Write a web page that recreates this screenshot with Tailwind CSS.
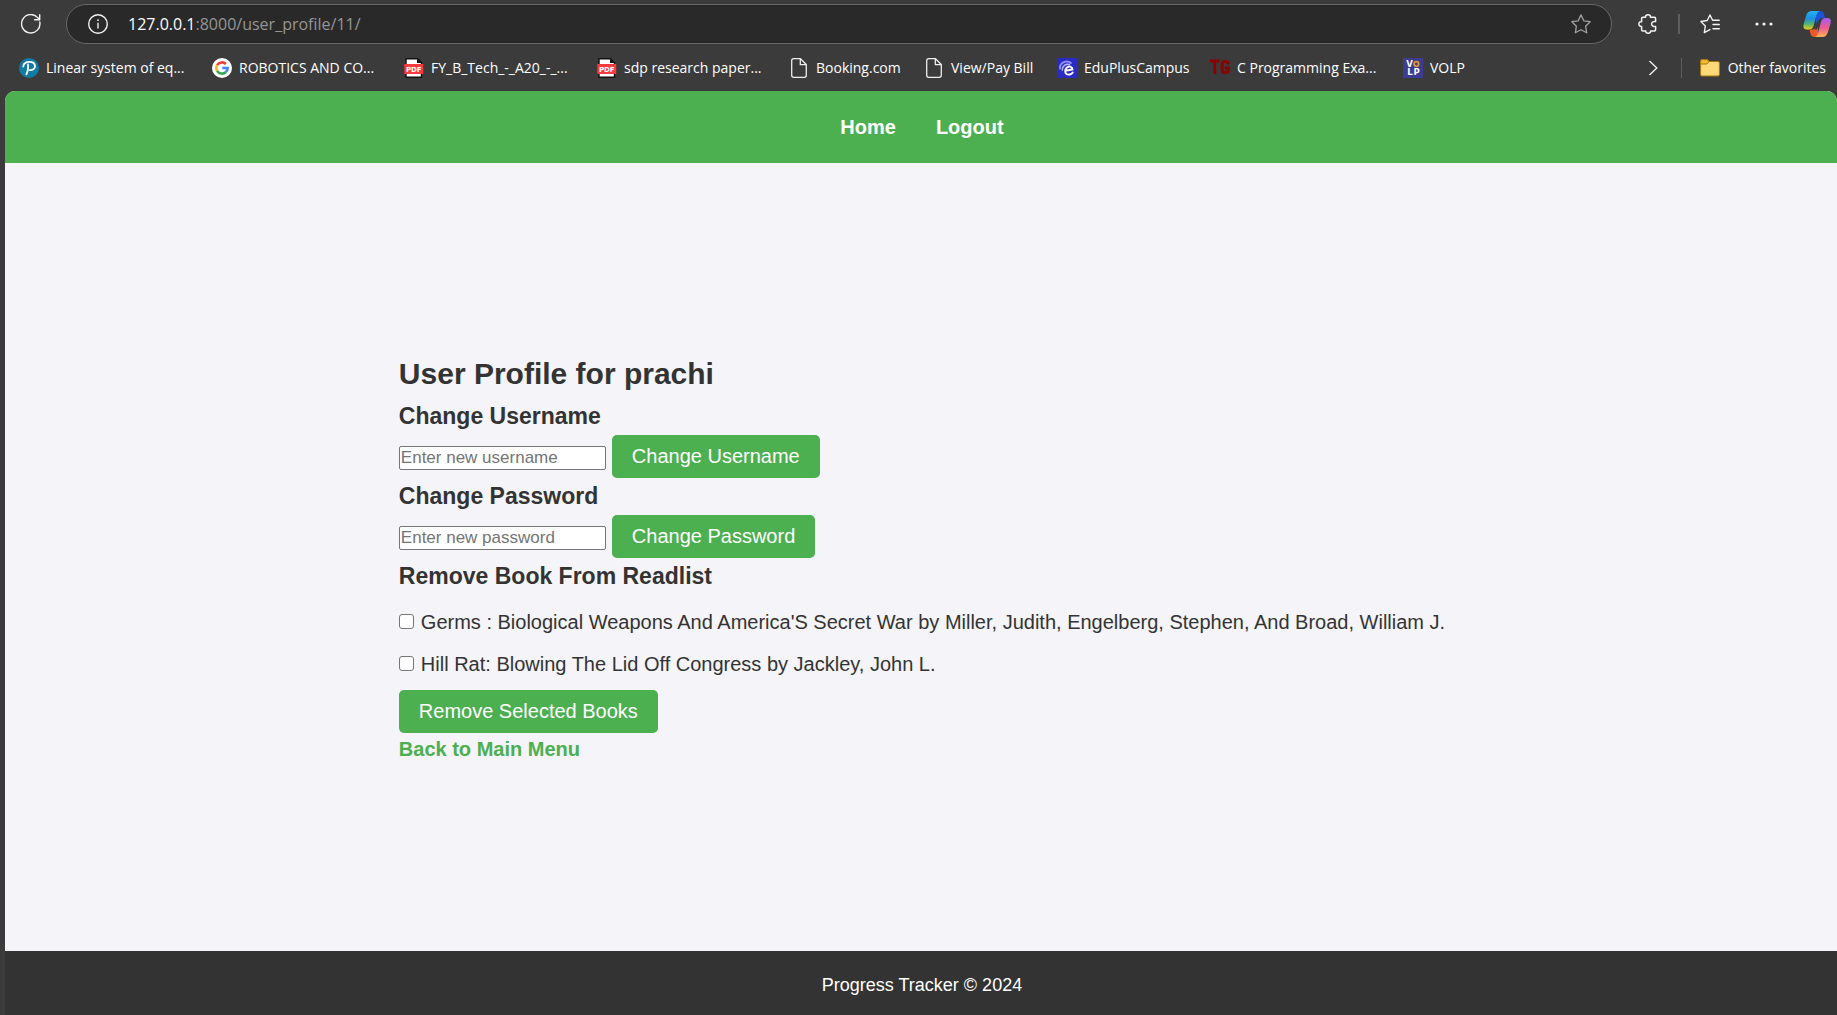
<!DOCTYPE html>
<html lang="en">
<head>
<meta charset="utf-8">
<title>User Profile</title>
<script src="https://cdn.jsdelivr.net/npm/@tailwindcss/browser@4"></script>
</head>
<body class="min-h-screen flex flex-col bg-[#3b3b3b] font-['Liberation_Sans',Arial,sans-serif] text-[#333]">

<!-- Browser toolbar -->
<header class="font-['Segoe_UI','Open_Sans',sans-serif] text-white">
  <div class="flex items-center h-12 pl-[21px] pr-[6px]">
    <button aria-label="Refresh" class="size-5 shrink-0">
      <svg class="size-5" viewBox="0 0 20 20" fill="none" stroke="#f2f2f2" stroke-width="1.4" stroke-linecap="round" stroke-linejoin="round"><path d="M18.8 8A9.2 9.2 0 1 1 16.6 3.6L18.5 5.6M18.7.8V5.8H13.6"/></svg>
    </button>
    <div class="flex flex-1 items-center h-10 ml-[25px] mr-[26px] pl-[21px] pr-5 rounded-full border border-[#686868] bg-[#292929]">
      <svg class="size-5 shrink-0" viewBox="0 0 20 20" fill="none" stroke="#f2f2f2" stroke-width="1.4"><circle cx="10" cy="10" r="9.3"/><path d="M10 8.8V14.6"/><circle cx="10" cy="6.2" r=".9" fill="#f2f2f2" stroke="none"/></svg>
      <p class="flex-1 ml-5 text-[16px] leading-6 text-[#959595]"><span class="text-white">127.0.0.1</span>:8000/user_profile/11/</p>
      <button aria-label="Add to favorites" class="size-5">
        <svg class="size-5" viewBox="0 0 20 20" fill="none" stroke="#a0a0a0" stroke-width="1.3" stroke-linejoin="round"><path d="M10 .9 12.8 6.8 19.2 7.7 14.6 12.2 15.7 18.8 10 15.7 4.3 18.8 5.4 12.2.8 7.7 7.2 6.8Z"/></svg>
      </button>
    </div>
    <button aria-label="Extensions" class="size-5">
      <svg class="size-5" viewBox="0 0 20 20" fill="none" stroke="#f2f2f2" stroke-width="1.5" stroke-linejoin="round"><path d="M4.8 3.2H7.6C7.2 1.6 8.4.8 10 .8S12.8 1.6 12.4 3.2H16.4Q17.6 3.2 17.6 4.4V7.6C15.500 7 13.600 8.200 13.600 10S15.500 13 17.600 12.400V15.8Q17.6 17 16.4 17H12.6C12.8 18.4 11.8 19.2 10.2 19.2S7.4 18.4 7.8 17H4.8Q3.6 17 3.6 15.8V12.4C2 12.6.9 11.6.9 10S2 7.4 3.6 7.8V4.400Q3.600 3.200 4.800 3.200Z"/></svg>
    </button>
    <span class="w-[2px] h-5 ml-5 mr-5 bg-[#5e5e5e]"></span>
    <button aria-label="Favorites" class="size-5">
      <svg class="size-5" viewBox="0 0 20 20" fill="none" stroke="#f2f2f2" stroke-width="1.4" stroke-linejoin="round" stroke-linecap="round"><path d="M19.2 6.3H12.6L10 1 7.2 6.5 .9 7.5 5.3 12 4.3 18.6 9.9 15.6M13 10.5H19.3M13 14.7H19.3"/></svg>
    </button>
    <button aria-label="Settings and more" class="w-5 h-5 ml-[34px]">
      <svg class="size-5" viewBox="0 0 20 20" fill="#f2f2f2"><circle cx="3" cy="10" r="1.6"/><circle cx="10" cy="10" r="1.6"/><circle cx="17" cy="10" r="1.6"/></svg>
    </button>
    <button aria-label="Copilot" class="size-7 ml-[29px]">
      <svg class="size-7" viewBox="0 0 28 28">
        <defs>
          <linearGradient id="left" x1="0" y1="0" x2="0" y2="1"><stop offset="0" stop-color="#22b5f5"/><stop offset=".4" stop-color="#1c8fe0"/><stop offset=".7" stop-color="#4fb276"/><stop offset="1" stop-color="#f2cf13"/></linearGradient>
          <linearGradient id="right" x1="0" y1="0" x2="0" y2="1"><stop offset="0" stop-color="#a45cf4"/><stop offset=".5" stop-color="#ec5a93"/><stop offset="1" stop-color="#ffb152"/></linearGradient>
        </defs>
        <path fill="#1b55d6" d="M13 1H17.5Q20 1 21 4L22 8H19Q16.500 8 15.800 10L13 14Z"/>
        <path fill="#f0582c" d="M15 27H11.500Q8.500 27 7.500 24L6.500 19.500H9.500Q11.800 19.500 12.500 17L15 11Z"/>
        <path fill="url(#left)" d="M9 1H16.500Q14.500 1.500 13.500 5L10.500 16Q9.500 19.500 6 19.500H4Q-.5 19.500.6 14.500L3 6Q4.300 1 9 1Z"/>
        <path fill="url(#right)" d="M19.500 27H12Q14 26.500 15 23L18 12Q19 8 22.500 8H24.500Q28.800 8 27.500 13.500L25 22Q23.500 27 19.500 27Z"/>
        <path fill="#3b3b3b" d="M14.500 11 17.500 10.500 14 19.500H11.500Z"/>
      </svg>
    </button>
  </div>

  <!-- Favorites bar -->
  <nav aria-label="Favorites bar" class="flex items-center h-[43px] pl-[19px] pr-[11px] pb-[3px] text-[14px] leading-5 whitespace-nowrap">
    <a href="#" class="flex items-center gap-[7px] w-[193px]">
      <svg class="size-5" viewBox="0 0 20 20"><circle cx="10" cy="10" r="10" fill="#117ba3"/><path d="M4.300 8.500C4.500 5.500 7 3.800 10.500 3.800 14 3.800 16 5.500 16 8.200 16 11 13.700 12.400 10.700 12.100M9 6.500C9.200 10 9 13.500 7.400 16.200" fill="none" stroke="#fff" stroke-width="1.800" stroke-linecap="round"/></svg>
      Linear system of eq...</a>
    <a href="#" class="flex items-center gap-[7px] w-[192px]">
      <svg class="size-5" viewBox="0 0 20 20" fill="none" stroke-width="2.600"><circle cx="10" cy="10" r="10" fill="#fff"/><path stroke="#ea4335" d="M5.100 7.200A5.600 5.600 0 0 1 13.900 6"/><path stroke="#fbbc05" d="M5.100 12.800A5.600 5.600 0 0 1 5.100 7.200"/><path stroke="#34a853" d="M13.700 14.200A5.600 5.600 0 0 1 5.100 12.800"/><path stroke="#4285f4" d="M10.200 10H15.600A5.600 5.600 0 0 1 13.700 14.200"/></svg>
      ROBOTICS AND CO...</a>
    <a href="#" class="flex items-center gap-[7px] w-[193px]">
      <svg class="size-5" viewBox="0 0 20 20"><path d="M2 .7H13.500L17.500 4.700V19.300H2Z" fill="#fff" stroke="#111" stroke-width="1.400"/><path d="M13 .7V5H17.500Z" fill="#111"/><rect x=".3" y="6" width="18.900" height="10" fill="#f83b3e"/><text x="9.800" y="13.700" text-anchor="middle" font-family="DejaVu Sans" font-weight="700" font-size="7" fill="#fff">PDF</text></svg>
      FY_B_Tech_-_A20_-_...</a>
    <a href="#" class="flex items-center gap-[7px] w-[193px]">
      <svg class="size-5" viewBox="0 0 20 20"><path d="M2 .7H13.500L17.500 4.700V19.300H2Z" fill="#fff" stroke="#111" stroke-width="1.400"/><path d="M13 .7V5H17.500Z" fill="#111"/><rect x=".3" y="6" width="18.900" height="10" fill="#f83b3e"/><text x="9.800" y="13.700" text-anchor="middle" font-family="DejaVu Sans" font-weight="700" font-size="7" fill="#fff">PDF</text></svg>
      sdp research paper...</a>
    <a href="#" class="flex items-center gap-2 w-[135px]">
      <svg class="w-[18px] h-5" viewBox="0 0 18 20" fill="none" stroke="#eee" stroke-width="1.300" stroke-linejoin="round"><path d="M3.700.7H10.500L16.300 6.500V17.300Q16.300 19.300 14.300 19.300H3.700Q1.700 19.300 1.700 17.300V2.700Q1.700.7 3.700.7ZM10.300.9V6.700H16"/></svg>
      Booking.com</a>
    <a href="#" class="flex items-center gap-2 w-[132px]">
      <svg class="w-[18px] h-5" viewBox="0 0 18 20" fill="none" stroke="#eee" stroke-width="1.300" stroke-linejoin="round"><path d="M3.700.7H10.500L16.300 6.500V17.300Q16.300 19.300 14.300 19.300H3.700Q1.700 19.300 1.700 17.300V2.700Q1.700.7 3.700.7ZM10.300.9V6.700H16"/></svg>
      View/Pay Bill</a>
    <a href="#" class="flex items-center gap-[7px] w-[153px]">
      <svg class="size-5" viewBox="0 0 20 20" fill="none" stroke-linecap="round"><rect width="20" height="20" rx="1" fill="#2a2bc4"/><path d="M3 10.500C2.500 5 9 1.500 14 5" stroke="#8c8df0" stroke-width="2"/><path d="M5.300 12C5 8 9 5.500 12.500 6.500" stroke="#b9baf8" stroke-width="1.500"/><path d="M8.500 12.800 15.500 11.500C15.400 8.700 12.500 7.800 10.300 9.200 7.800 10.800 7.500 14.500 9.500 16 11.500 17.300 14.500 16.500 15.700 14.500" stroke="#fff" stroke-width="1.900"/></svg>
      EduPlusCampus</a>
    <a href="#" class="flex items-center gap-[7px] w-[193px]">
      <svg class="size-5" viewBox="0 0 20 20" fill="none" stroke="#8b0000" stroke-width="3"><path d="M0 3H9.500M4.800 3V16M18.300 6.500C18 2.500 12.300 2 12.100 7V11.500C12.300 16 18.300 15.500 18.300 11.500V10H14.800"/></svg>
      C Programming Exa...</a>
    <a href="#" class="flex items-center gap-[7px]">
      <svg class="size-5" viewBox="0 0 20 20" font-family="DejaVu Sans" font-weight="700" font-size="8.500" text-anchor="middle" fill="#fff"><rect width="20" height="20" fill="#3d3b92"/><text x="6.500" y="9">V</text><circle cx="13.400" cy="6" r="2.300" fill="none" stroke="#e09b2d" stroke-width="1.700"/><text x="7" y="17">L</text><text x="13.500" y="17">P</text></svg>
      VOLP</a>
    <button aria-label="More favorites" class="ml-auto">
      <svg class="w-3 h-5" viewBox="0 0 12 20" fill="none" stroke="#eee" stroke-width="1.400"><path d="M2.500 3 9.800 10 2.500 17"/></svg>
    </button>
    <span class="w-px h-5 ml-[22px] mr-[18px] bg-[#5e5e5e]"></span>
    <a href="#" class="flex items-center gap-2">
      <svg class="size-5" viewBox="0 0 20 20" stroke="#a8780c"><path d="M.6 3.500Q.6 1.600 2.200 1.600H7L9.200 3.500H18Q19.400 3.500 19.400 5V16.500Q19.400 18 18 18H2Q.6 18 .6 16.500Z" fill="#ffd977"/><path d="M.6 3.500Q.6 1.600 2.200 1.600H7L9 3.500 7 6H.6Z" fill="#f5bd2e"/></svg>
      Other favorites</a>
  </nav>
</header>

<!-- Web page -->
<div class="flex flex-1 flex-col ml-[5px] overflow-hidden rounded-t-[10px] bg-[#f4f4f9] text-[20px] leading-8">
  <nav aria-label="Site" class="flex justify-center gap-10 py-5 pl-[2px] bg-[#4caf50] font-bold text-white">
    <a href="#">Home</a>
    <a href="#">Logout</a>
  </nav>

  <main class="flex flex-1 flex-col items-center justify-center pl-[2px]">
    <div>
      <h2 class="text-[30px] leading-12 font-bold">User Profile for prachi</h2>

      <h3 class="text-[23px] leading-[37px] font-bold"><label for="username">Change Username</label></h3>
      <form class="flex items-baseline gap-[6px]">
        <input id="username" type="text" placeholder="Enter new username" class="w-[207px] px-px py-px border border-[#767676] rounded-[2px] bg-white text-[17px] leading-5 placeholder:text-[#757575]">
        <button type="button" class="px-5 py-[10px] rounded-[5px] bg-[#4caf50] leading-[23px] text-white">Change Username</button>
      </form>

      <h3 class="text-[23px] leading-[37px] font-bold"><label for="password">Change Password</label></h3>
      <form class="flex items-baseline gap-[6px]">
        <input id="password" type="password" placeholder="Enter new password" class="w-[207px] px-px py-px border border-[#767676] rounded-[2px] bg-white text-[17px] leading-5 placeholder:text-[#757575]">
        <button type="button" class="px-5 py-[10px] rounded-[5px] bg-[#4caf50] leading-[23px] text-white">Change Password</button>
      </form>

      <h3 class="text-[23px] leading-[37px] font-bold">Remove Book From Readlist</h3>
      <form>
        <ul class="flex flex-col gap-[10px] pt-[11px] pb-[10px]">
          <li><label class="flex items-center gap-[7px]"><input type="checkbox" class="appearance-none size-[15px] border border-[#767676] rounded-[3px] bg-white">Germs : Biological Weapons And America'S Secret War by Miller, Judith, Engelberg, Stephen, And Broad, William J.</label></li>
          <li><label class="flex items-center gap-[7px]"><input type="checkbox" class="appearance-none size-[15px] border border-[#767676] rounded-[3px] bg-white">Hill Rat: Blowing The Lid Off Congress by Jackley, John L.</label></li>
        </ul>
        <button type="button" class="block px-5 py-[10px] rounded-[5px] bg-[#4caf50] leading-[23px] text-white">Remove Selected Books</button>
      </form>
      <a href="#" class="block w-fit font-bold text-[#4caf50]">Back to Main Menu</a>
    </div>
  </main>

  <footer class="pt-[18px] pb-[14px] pl-[2px] bg-[#333] text-center text-[18px] text-white">Progress Tracker © 2024</footer>
</div>
</body>
</html>
